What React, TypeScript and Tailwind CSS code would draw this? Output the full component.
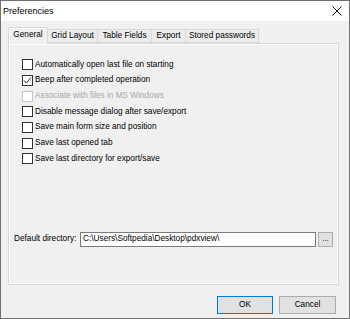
import React from 'react';

const options = [
  { label: 'Automatically open last file on starting', checked: false },
  { label: 'Beep after completed operation', checked: true },
  { label: 'Associate with files in MS Windows', checked: false, disabled: true },
  { label: 'Disable message dialog after save/export', checked: false },
  { label: 'Save main form size and position', checked: false },
  { label: 'Save last opened tab', checked: false },
  { label: 'Save last directory for export/save', checked: false },
];

const tabs = [
  { label: 'General', w: 'w-[40px]' },
  { label: 'Grid Layout', w: 'w-[50px]' },
  { label: 'Table Fields', w: 'w-[54px]' },
  { label: 'Export', w: 'w-[34px]' },
  { label: 'Stored passwords', w: 'w-[73px]' },
];

function CheckBox({ checked, disabled }: { checked: boolean; disabled?: boolean }) {
  return (
    <span
      className={`w-[11px] h-[11px] flex items-center justify-center border bg-white shrink-0 ${
        disabled ? 'border-[#c6c6c6]' : 'border-[#333333]'
      }`}
    >
      {checked && (
        <svg width="9" height="9" viewBox="0 0 9 9">
          <path d="M1 4.5 L3.4 7 L8 1.5" fill="none" stroke="#222" strokeWidth="1" />
        </svg>
      )}
    </span>
  );
}

export default function App() {
  return (
    <div className="w-[350px] h-[319px] border border-[#707070] bg-[#f0f0f0] flex flex-col overflow-hidden font-['Liberation_Sans',Arial,sans-serif] text-[8.25px] leading-none text-black">
      {/* Title bar */}
      <div className="h-[20px] bg-white flex items-center justify-between pl-[2px] pr-[7px]">
        <span className="text-[9px]">Preferencies</span>
        <svg width="10" height="10" viewBox="0 0 10 10">
          <path d="M0.5 0.5 L9.5 9.5 M9.5 0.5 L0.5 9.5" stroke="#111" strokeWidth="1" />
        </svg>
      </div>

      <div className="flex-1 flex flex-col pl-[7px] pr-[10px]">
        {/* Tabs */}
        <div className="mt-[6px] h-[16px] flex items-end relative z-10">
          {tabs.map((t, i) =>
            i === 0 ? (
              <div
                key={t.label}
                className={`${t.w} h-[17px] -mb-px bg-[#f0f0f0] border border-b-0 border-[#d9d9d9] shadow-[inset_1px_1px_0_#fff] flex items-center justify-center pb-[2px]`}
              >
                {t.label}
              </div>
            ) : (
              <div
                key={t.label}
                className={`${t.w} h-[14px] bg-[#ececec] border border-l-0 border-[#d9d9d9] flex items-center justify-center`}
              >
                {t.label}
              </div>
            )
          )}
        </div>

        {/* Panel */}
        <div className="h-[242px] border border-[#d9d9d9] shadow-[inset_1px_1px_0_#fff,inset_-1px_-1px_0_#fff] flex flex-col">
          <div className="pl-[13px] pt-[13px]">
            {options.map((o) => (
              <div key={o.label} className="h-[15.67px] flex items-center gap-[2px]">
                <CheckBox checked={o.checked} disabled={o.disabled} />
                <span className={o.disabled ? 'text-[#a8a8a8]' : ''}>{o.label}</span>
              </div>
            ))}
          </div>

          <div className="mt-[65px] flex items-center pl-[5px] pr-[5px]">
            <span className="w-[66px]">Default directory:</span>
            <div className="w-[236px] h-[15px] bg-white border border-[#7a7a7a] flex items-center pl-[2px]">
              C:\Users\Softpedia\Desktop\pdxview\
            </div>
            <div className="ml-[2px] w-[15px] h-[15px] bg-[#e1e1e1] border border-[#adadad] flex items-end justify-center pb-[3px] text-[8px]">
              ...
            </div>
          </div>
        </div>

        {/* Buttons */}
        <div className="mt-[11px] flex justify-end gap-[6px] pr-[3px]">
          <button className="w-[56px] h-[18px] bg-[#e1e1e1] border border-[#0078d7] flex items-center justify-center">
            OK
          </button>
          <button className="w-[57px] h-[18px] bg-[#e1e1e1] border border-[#adadad] flex items-center justify-center">
            Cancel
          </button>
        </div>
      </div>
    </div>
  );
}
